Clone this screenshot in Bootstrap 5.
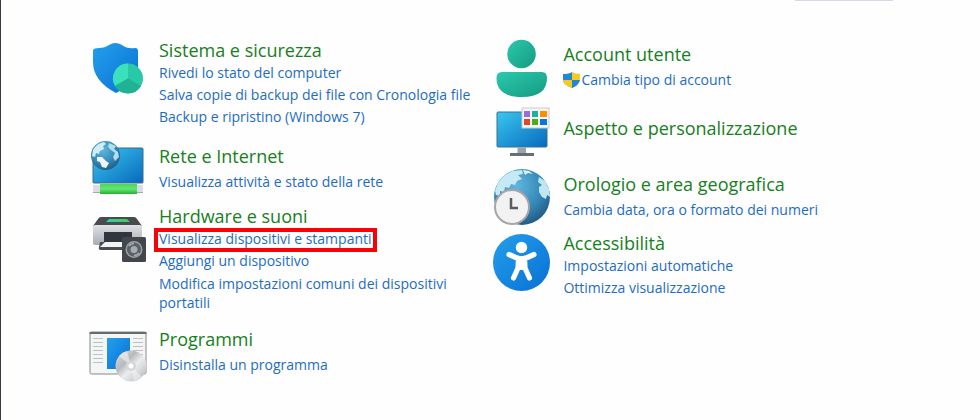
<!DOCTYPE html>
<html lang="it">
<head>
<meta charset="utf-8">
<meta name="viewport" content="width=device-width, initial-scale=1">
<title>Pannello di controllo</title>
<link href="https://cdn.jsdelivr.net/npm/bootstrap@5.3.0/dist/css/bootstrap.min.css" rel="stylesheet">
<style>
  body { font-family: "Open Sans", "Noto Sans", sans-serif; background: #fefefe; }
  .panel-window { border-left: 1px solid #343a46; padding-left: 87px; }
  .top-strip { height: 38px; padding-right: 87px; }
  .search-edge { width: 98px; height: 1px; background: #d3dae6; }
  .category-grid { display: grid; grid-template-columns: 5fr 6fr; }
  .category-list { gap: 7px; }
  .category-list.second { gap: 6px; padding-top: 1px; }
  .category { gap: 13px; min-height: 58px; padding-right: 16px; }
  .second .category { gap: 12px; }
  .category svg.glyph { width: 58px; height: 58px; flex: none; overflow: visible; }
  .category h2 { font-size: 18px; line-height: 24px; margin: 0; font-weight: 400; }
  .category h2 a { color: #16801d; }
  .roomy h2 { margin-bottom: 3px; }
  .category li { font-size: 14px; line-height: 22px; }
  .category li.wrapping { line-height: 19px; padding-top: 2px; }
  .category a { text-decoration: none; }
  .category li a { color: #1d6cc4; }
  .category a:hover { text-decoration: underline; }
  .highlighted { position: relative; display: inline-block; }
  .highlighted::after { content: ""; position: absolute; inset: 0 -5px -2px -5px; border: 4px solid #fb0007; pointer-events: none; }
  .uac { width: 18px; height: 18px; }
</style>
<script src="https://cdn.jsdelivr.net/npm/bootstrap@5.3.0/dist/js/bootstrap.bundle.min.js"></script>
</head>
<body>
<div class="panel-window min-vh-100">
  <div class="top-strip d-flex justify-content-end"><div class="search-edge"></div></div>
  <main class="category-grid">
    <div class="category-list d-flex flex-column">

      <section class="category d-flex align-items-start">
        <svg class="glyph" viewBox="0 0 58 58" aria-hidden="true">
          <defs>
            <linearGradient id="shieldFill" x1="0" y1="0" x2="1" y2="1"><stop stop-color="#249fec"/><stop offset="1" stop-color="#0870d4"/></linearGradient>
            <linearGradient id="screenFill" x1="0" y1="0" x2="1" y2="1"><stop stop-color="#39c7ef"/><stop offset="1" stop-color="#0869bd"/></linearGradient>
            <radialGradient id="oceanFill" cx=".4" cy=".3" r=".75"><stop stop-color="#62b7e0"/><stop offset=".6" stop-color="#3489b9"/><stop offset="1" stop-color="#22577e"/></radialGradient>
          </defs>
          <path d="M5 12Q6 10 11 10Q17 10 21 7Q27 3 34 7Q39 11 47 10Q50 10 50 13V28Q50 45 28 55Q5 43 5 24Z" fill="url(#shieldFill)"/>
          <circle cx="40" cy="40.500" r="15" fill="#29c8a6"/>
          <path d="M40 25.500A15 15 0 0 0 27 48L40 40.500Z" fill="#3be0bc"/>
          <path d="M27 48A15 15 0 0 0 53 48L40 40.500Z" fill="#20b292"/>
        </svg>
        <div>
          <h2><a href="#">Sistema e sicurezza</a></h2>
          <ul class="list-unstyled mb-0">
            <li><a href="#">Rivedi lo stato del computer</a></li>
            <li><a href="#">Salva copie di backup dei file con Cronologia file</a></li>
            <li><a href="#">Backup e ripristino (Windows 7)</a></li>
          </ul>
        </div>
      </section>

      <section class="category roomy d-flex align-items-center mt-1">
        <svg class="glyph" viewBox="0 0 58 58" aria-hidden="true">
          <defs><linearGradient id="cableFill" x2="0" y2="1"><stop stop-color="#4ed45a"/><stop offset=".5" stop-color="#65e770"/><stop offset="1" stop-color="#26ae38"/></linearGradient></defs>
          <rect x="5" y="9" width="50" height="35" rx="1" fill="url(#screenFill)" stroke="#386d8a"/>
          <rect x="5" y="46" width="50" height="8" fill="#dcdde2"/><path d="M5 53.500H55" stroke="#aaa7b0"/>
          <rect x="12" y="45" width="37" height="10" fill="url(#cableFill)"/>
          <g transform="translate(3 2)">
            <circle cx="14.500" cy="14.500" r="14.500" fill="url(#oceanFill)"/>
            <path d="M2 9Q6 2 13 1L15 3L12 5L13 8L9 10L8 13L5 12L4 16L1 15Z" fill="#d1edf7"/>
            <path d="M6 16L11 16L15 20L18 22L15 27L11 26L9 21L6 20Z" fill="#eef8fb"/>
            <path d="M18 2L25 5L23 8L27 11L28 16L24 20L22 16L24 12L20 9L17 6Z" fill="#b0deed"/>
          </g>
        </svg>
        <div>
          <h2><a href="#">Rete e Internet</a></h2>
          <ul class="list-unstyled mb-0">
            <li><a href="#">Visualizza attività e stato della rete</a></li>
          </ul>
        </div>
      </section>

      <section class="category d-flex align-items-start">
        <svg class="glyph" viewBox="0 0 58 58" aria-hidden="true">
          <defs>
            <linearGradient id="printerFill" x2="0" y2="1"><stop stop-color="#e0e1e5"/><stop offset="1" stop-color="#a8abb4"/></linearGradient>
            <linearGradient id="glassFill"><stop stop-color="#32cfad"/><stop offset="1" stop-color="#42cb54"/></linearGradient>
          </defs>
          <path d="M13 13H46Q48 13 49 15L54 22H5L10 15Q11 13 13 13Z" fill="#494b4e"/>
          <path d="M21 15H39L42 18H18Z" fill="url(#glassFill)"/>
          <rect x="5" y="21" width="49" height="20" rx="2" fill="url(#printerFill)"/>
          <path d="M16 28H44V38H16Z" fill="#32373e"/>
          <path d="M12 38H40V46H13Q10 46 11 43Z" fill="#4a4d52"/>
          <path d="M17 38H38V43H12Z" fill="#f2f3f5"/>
          <rect x="34" y="33" width="24" height="25" rx="1.500" fill="#43464a"/>
          <circle cx="46" cy="45.500" r="8.500" fill="#9ba0a4"/><circle cx="46" cy="45.500" r="7" fill="#5b6064"/>
          <circle cx="46" cy="45.500" r="3.500" fill="#a4abb2"/><path d="M41 42A6 6 0 0 1 46 39.500M51 49A6 6 0 0 1 46 51.500" fill="none" stroke="#aab0b5" stroke-width="1.500"/>
        </svg>
        <div>
          <h2><a href="#">Hardware e suoni</a></h2>
          <ul class="list-unstyled mb-0">
            <li><a href="#" class="highlighted">Visualizza dispositivi e stampanti</a></li>
            <li><a href="#">Aggiungi un dispositivo</a></li>
            <li class="wrapping"><a href="#">Modifica impostazioni comuni dei dispositivi portatili</a></li>
          </ul>
        </div>
      </section>

      <section class="category roomy d-flex align-items-start mt-2">
        <svg class="glyph" viewBox="0 0 58 58" aria-hidden="true">
          <defs><linearGradient id="discFill" x1="0" y1="0" x2="1" y2="1"><stop stop-color="#dedfe1"/><stop offset=".35" stop-color="#b7babd"/><stop offset=".55" stop-color="#eceded"/><stop offset="1" stop-color="#aeb3b8"/></linearGradient></defs>
          <rect x="2" y="5" width="56" height="42" rx="1.500" fill="#f4f5f5" stroke="#85898c"/>
          <path d="M1.500 6H58.500" stroke="#686b6e" stroke-width="2"/>
          <path d="M5 11.500H15M5 15.500H15M5 19.500H15M5 23.500H15M5 27.500H15M5 31.500H15M5 35.500H15M45 11.500H55M45 15.500H55M45 19.500H55M45 23.500H55M45 27.500H55" stroke="#bfc2c4"/>
          <rect x="19" y="11" width="23" height="31" fill="url(#shieldFill)"/>
          <circle cx="43" cy="39" r="15.500" fill="url(#discFill)"/>
          <path d="M43 39L31 29A15.500 15.500 0 0 1 39 24Z" fill="#f3f3f3" opacity=".6"/>
          <path d="M43 39L54 50A15.500 15.500 0 0 1 46 54Z" fill="#fff" opacity=".4"/>
          <circle cx="43" cy="39" r="5" fill="#d5d6d8"/><circle cx="43" cy="39" r="2.500" fill="#fff"/>
        </svg>
        <div>
          <h2><a href="#">Programmi</a></h2>
          <ul class="list-unstyled mb-0">
            <li><a href="#">Disinstalla un programma</a></li>
          </ul>
        </div>
      </section>
    </div>

    <div class="category-list second d-flex flex-column">
      <section class="category roomy d-flex align-items-center">
        <svg class="glyph" viewBox="0 0 58 58" aria-hidden="true">
          <defs><linearGradient id="personFill" x1="0" y1="0" x2="1" y2="1"><stop stop-color="#2bc9ae"/><stop offset="1" stop-color="#159b81"/></linearGradient></defs>
          <circle cx="28.500" cy="15" r="14.300" fill="url(#personFill)"/>
          <path d="M9 33H49Q54 33 54 39Q54 58 29 58Q3.500 58 3.500 39Q3.500 33 9 33Z" fill="url(#personFill)"/>
        </svg>
        <div class="pb-1">
          <h2><a href="#">Account utente</a></h2>
          <ul class="list-unstyled mb-0">
            <li><a href="#" class="d-flex align-items-center"><svg class="uac" viewBox="0 0 18 18" aria-hidden="true"><path d="M9 1Q6 3 0 3V8Q0 14 9 17Z" fill="#2087d5"/><path d="M9 1Q12 3 17 3V8Q17 14 9 17Z" fill="#f9c91d"/><path d="M0 9H9V17Q1 14 0 9Z" fill="#f9c91d"/><path d="M9 9H17Q16 14 9 17Z" fill="#2087d5"/></svg><span>Cambia tipo di account</span></a></li>
          </ul>
        </div>
      </section>

      <section class="category d-flex align-items-center">
        <svg class="glyph" viewBox="0 0 58 58" aria-hidden="true">
          <rect x="4" y="9" width="50" height="35" rx="1" fill="url(#screenFill)" stroke="#3a718e"/>
          <path d="M24.500 44.500H33V50H24.500Z" fill="#9ca3aa"/><path d="M17 50H41V53H17Z" fill="#686e75"/>
          <rect x="29" y="5" width="27" height="20" fill="#f7f7f8" stroke="#c7c9cd"/>
          <path d="M31 8H37V14H31Z" fill="#9c6bdc"/><path d="M39 8H45V14H39Z" fill="#19b4a0"/><path d="M47 8H54V14H47Z" fill="#ff8d00"/>
          <path d="M31 16H37V22H31Z" fill="#de4b20"/><path d="M39 16H45V22H39Z" fill="#4caf10"/><path d="M47 16H54V22H47Z" fill="#0877d8"/>
        </svg>
        <div class="pb-2">
          <h2><a href="#">Aspetto e personalizzazione</a></h2>
        </div>
      </section>

      <section class="category roomy d-flex align-items-center">
        <svg class="glyph" viewBox="0 0 58 58" aria-hidden="true">
          <circle cx="29" cy="30" r="28" fill="url(#oceanFill)"/>
          <path d="M4 18Q9 8 20 4L29 3L30 7L25 8L29 12L24 14L22 18L18 17L16 21L12 20L11 25L7 24L7 29L3 28L2 24Z" fill="#c6e9f6"/>
          <path d="M30 3L36 4L40 7L35 6L32 8Z" fill="#dcf2f8"/>
          <path d="M46 10L52 14L56 22L57 30L54 28L53 32L49 30L46 25L46 20L49 18L45 15Z" fill="#c0e6f2"/>
          <circle cx="19" cy="40" r="17" fill="#f2f2f3" stroke="#aaa4a6" stroke-width="2"/>
          <path d="M18 31V41H25" fill="none" stroke="#5b5c5e" stroke-width="2.500"/>
        </svg>
        <div>
          <h2><a href="#">Orologio e area geografica</a></h2>
          <ul class="list-unstyled mb-0">
            <li><a href="#">Cambia data, ora o formato dei numeri</a></li>
          </ul>
        </div>
      </section>

      <section class="category d-flex align-items-center">
        <svg class="glyph" viewBox="0 0 58 58" aria-hidden="true">
          <circle cx="28.500" cy="26.500" r="28.500" fill="url(#shieldFill)"/>
          <circle cx="28.500" cy="11.500" r="5.700" fill="#fff"/>
          <path d="M16 18.500L25 22.500H32L41 18.500M25.500 22L25 32L20.500 42M31.500 22L32 32L36.500 42" fill="none" stroke="#fff" stroke-width="5.200" stroke-linecap="round" stroke-linejoin="round"/>
          <path d="M24 21H33V32L31 34H26L24 32Z" fill="#fff"/>
        </svg>
        <div>
          <h2><a href="#">Accessibilità</a></h2>
          <ul class="list-unstyled mb-0">
            <li><a href="#">Impostazioni automatiche</a></li>
            <li><a href="#">Ottimizza visualizzazione</a></li>
          </ul>
        </div>
      </section>
    </div>
  </main>
</div>
</body>
</html>
